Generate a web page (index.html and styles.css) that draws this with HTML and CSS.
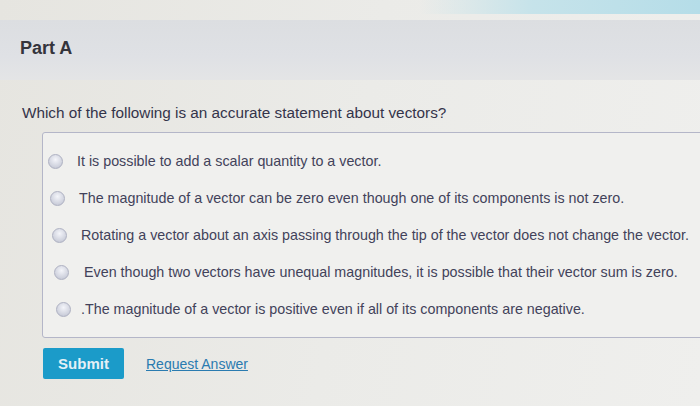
FILE: index.html
```html
<!DOCTYPE html>
<html>
<head>
<meta charset="utf-8">
<link rel="stylesheet" href="styles.css">
</head>
<body>
<div class="page">
  <div class="topstrip"></div>
  <div class="header">
    <h2 class="part">Part A</h2>
  </div>
  <p class="question">Which of the following is an accurate statement about vectors?</p>
  <div class="answers">
    <label class="opt o1"><span class="radio"></span><span class="txt">It is possible to add a scalar quantity to a vector.</span></label>
    <label class="opt o2"><span class="radio"></span><span class="txt">The magnitude of a vector can be zero even though one of its components is not zero.</span></label>
    <label class="opt o3"><span class="radio"></span><span class="txt">Rotating a vector about an axis passing through the tip of the vector does not change the vector.</span></label>
    <label class="opt o4"><span class="radio"></span><span class="txt">Even though two vectors have unequal magnitudes, it is possible that their vector sum is zero.</span></label>
    <label class="opt o5"><span class="radio"></span><span class="txt">.The magnitude of a vector is positive even if all of its components are negative.</span></label>
  </div>
  <div class="actions">
    <button class="submit">Submit</button>
    <a class="request" href="#">Request Answer</a>
  </div>
</div>
</body>
</html>
```
FILE: styles.css
```css
html, body {
  margin: 0;
  padding: 0;
}
body {
  width: 700px;
  height: 406px;
  overflow: hidden;
  background: linear-gradient(100deg, #e6e5e0 0%, #ebebe8 50%, #efefed 100%);
  font-family: "Liberation Sans", Arial, sans-serif;
  color: #3b3b48;
}
.page {
  position: relative;
  height: 406px;
  padding-top: 20px;
  box-sizing: border-box;
}
.topstrip {
  position: absolute;
  top: 0;
  left: 420px;
  width: 280px;
  height: 14px;
  background: linear-gradient(90deg, rgba(190,225,235,0) 0%, #c6e3ea 40%, #b5dde8 100%);
}
.header {
  height: 60px;
  background: linear-gradient(180deg, #dcdee1 0%, #dfe1e5 60%, #e4e5e6 100%);
  display: flex;
  align-items: center;
  padding-left: 20px;
}
.part {
  margin: 0;
  font-size: 18px;
  font-weight: bold;
  color: #34343c;
  padding-bottom: 4px;
}
.question {
  margin: 24px 0 0 22px;
  font-size: 15.3px;
  color: #34344a;
}
.answers {
  margin: 10px -20px 0 42px;
  height: 206px;
  border: 1px solid #b4b6c8;
  border-radius: 3px;
  background: #f0f0ee;
  padding-top: 19px;
  box-sizing: border-box;
  display: flex;
  flex-direction: column;
  gap: 19px;
}
.opt {
  display: flex;
  align-items: center;
  font-size: 14.3px;
  color: #42425a;
  height: 18px;
}
.radio {
  width: 13px;
  height: 13px;
  border-radius: 50%;
  background: radial-gradient(circle at 50% 35%, #f4f5fa 0%, #cdd0dc 70%, #b5b8c8 100%);
  border: 1px solid #aeb1c2;
  flex: none;
}
.o1 { padding-left: 5px; }
.o1 .radio { margin-right: 14px; }
.o2 { padding-left: 7px; }
.o2 .radio { margin-right: 14px; }
.o3 { padding-left: 9px; }
.o3 .radio { margin-right: 14px; }
.o4 { padding-left: 11px; }
.o4 .radio { margin-right: 15px; }
.o5 { padding-left: 13px; }
.o5 .radio { margin-right: 10px; }
.actions {
  margin: 10px 0 0 43px;
  display: flex;
  align-items: center;
  gap: 22px;
}
.submit {
  width: 81px;
  height: 31px;
  border: none;
  border-radius: 2px;
  background: #1b9bc9;
  color: #e4f0f6;
  font-family: "Liberation Sans", Arial, sans-serif;
  font-size: 15px;
  font-weight: bold;
  padding: 0;
}
.request {
  font-size: 14px;
  color: #2a7bb0;
  text-decoration: underline;
}
```
